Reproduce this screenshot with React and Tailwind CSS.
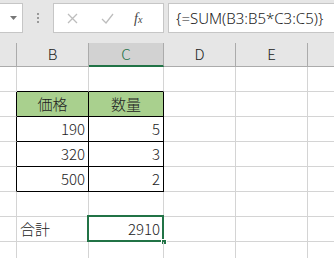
import React from 'react';

const GRID = 'border-[#d4d4d4]';

const cols = [
    { key: 'A', w: 'w-[17px]' },
    { key: 'B', w: 'w-[72px]' },
    { key: 'C', w: 'w-[75px]' },
    { key: 'D', w: 'w-[72px]' },
    { key: 'E', w: 'w-[72px]' },
    { key: 'F', w: 'flex-1' },
];

// row data: [A, B, C] content + styling flags
const rows = [
    {},
    { b: '価格', c: '数量', head: true },
    { b: '190', c: '5', table: true },
    { b: '320', c: '3', table: true },
    { b: '500', c: '2', table: true, last: true },
    {},
    { b: '合計', c: '2910', total: true },
    {},
];

const Toolbar = () => (
    <div className="h-[43px] bg-[#e6e6e6] flex items-start pt-[3px]">
        <div className="w-[23px] h-[30px] bg-white border border-[#c6c6c6] border-l-0 flex items-center justify-end pr-[5px]">
            <svg width="7" height="4" viewBox="0 0 7 4"><path d="M0 0h7L3.5 4z" fill="#777" /></svg>
        </div>
        <div className="w-[30px] h-[30px] flex flex-col items-center justify-center gap-[2px]">
            <span className="w-[2px] h-[2px] bg-[#999]" />
            <span className="w-[2px] h-[2px] bg-[#999]" />
            <span className="w-[2px] h-[2px] bg-[#999]" />
        </div>
        <div className="w-[111px] h-[30px] bg-white border border-[#c6c6c6] flex items-center">
            <svg className="ml-[13px]" width="11" height="11" viewBox="0 0 11 11">
                <path d="M1 1l9 9M10 1l-9 9" stroke="#bdbdbd" strokeWidth="1.3" fill="none" />
            </svg>
            <svg className="ml-[23px]" width="13" height="11" viewBox="0 0 13 11">
                <path d="M1 6l4 4 7-9" stroke="#bdbdbd" strokeWidth="1.3" fill="none" />
            </svg>
            <span
                className="ml-[20px] text-[14px] italic text-[#444]"
                style={{ fontFamily: '"Liberation Serif", serif' }}
            >
                f<span className="text-[10px]">x</span>
            </span>
        </div>
        <div
            className="ml-[4px] flex-1 h-[30px] bg-white border border-r-0 border-[#c6c6c6] flex items-center pl-[7px] text-[15px] text-[#222] font-light"
            style={{ fontFamily: '"Noto Sans", sans-serif' }}
        >
            {'{=SUM(B3:B5*C3:C5)}'}
        </div>
    </div>
);

const HeaderRow = () => (
    <div className="flex h-[24px] bg-[#e6e6e6] border-b border-[#ababab]">
        {cols.map((c, i) => (
            <div
                key={c.key}
                className={`${c.w} shrink-0 flex items-center justify-center text-[15px] ${
                    i === 5 ? '' : 'border-r border-[#ababab]'
                } ${c.key === 'C' ? 'bg-[#d2d2d2] text-[#217346] border-b-2 border-b-[#217346] -mb-px' : 'text-[#222]'}`}
            >
                {i === 0 || i === 5 ? '' : c.key}
            </div>
        ))}
    </div>
);

const Row = ({ r, next }) => {
    const black = (flag) => (flag ? 'border-black' : GRID);
    const inTable = r.head || r.table;
    const nextInTable = next && (next.head || next.table);
    return (
        <div className="flex h-[25px]">
            <div className={`w-[17px] shrink-0 border-b ${GRID} border-r ${inTable ? 'border-r-black' : ''}`} />
            <div
                className={`w-[72px] shrink-0 border-b border-r ${black(inTable)} ${
                    nextInTable ? 'border-b-black' : ''
                } ${r.head ? 'bg-[#a9d08e] justify-center' : ''} ${
                    r.table ? 'justify-end pr-[3px]' : ''
                } ${r.total ? 'justify-start pl-[3px]' : ''} flex items-center text-[15px] text-[#222]`}
            >
                {r.b}
            </div>
            <div
                className={`relative w-[75px] shrink-0 border-b border-r ${black(inTable)} ${
                    nextInTable ? 'border-b-black' : ''
                } ${r.head ? 'bg-[#a9d08e] justify-center' : 'justify-end pr-[3px]'} flex items-center text-[15px] text-[#222]`}
            >
                {r.c}
                {r.total && (
                    <>
                        <div className="absolute -left-[2px] -top-[2px] -right-px -bottom-px border-2 border-[#217346]" />
                        <div className="absolute -right-[4px] -bottom-[4px] w-[6px] h-[6px] bg-[#217346] border border-white" />
                    </>
                )}
            </div>
            <div className={`w-[72px] shrink-0 border-b border-r ${GRID}`} />
            <div className={`w-[72px] shrink-0 border-b border-r ${GRID}`} />
            <div className={`flex-1 border-b ${GRID}`} />
        </div>
    );
};

export default function App() {
    return (
        <div
            className="w-[334px] h-[258px] overflow-hidden bg-white font-light"
            style={{ fontFamily: '"Noto Sans CJK JP", "Noto Sans", sans-serif' }}
        >
            <Toolbar />
            <HeaderRow />
            {rows.map((r, i) => (
                <Row key={i} r={r} next={rows[i + 1]} />
            ))}
        </div>
    );
}
